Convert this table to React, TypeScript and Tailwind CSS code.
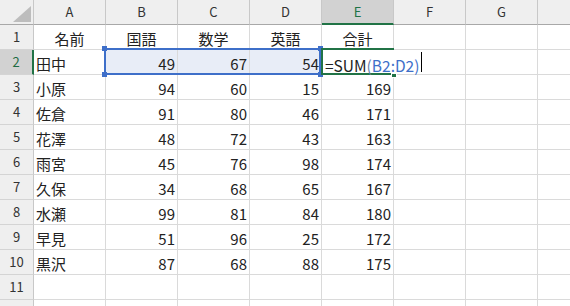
import React from "react";

const cols = ["A", "B", "C", "D", "E", "F", "G", ""];
const data: (string | number)[][] = [
  ["名前", "国語", "数学", "英語", "合計"],
  ["田中", 49, 67, 54, ""],
  ["小原", 94, 60, 15, 169],
  ["佐倉", 91, 80, 46, 171],
  ["花澤", 48, 72, 43, 163],
  ["雨宮", 45, 76, 98, 174],
  ["久保", 34, 68, 65, 167],
  ["水瀬", 99, 81, 84, 180],
  ["早見", 51, 96, 25, 172],
  ["黒沢", 87, 68, 88, 175],
  [],
  [],
];

const font = {
  fontFamily: '"Noto Sans CJK JP", "Noto Sans", sans-serif',
};

export default function App() {
  return (
    <div
      className="relative w-[570px] h-[306px] overflow-hidden bg-white text-[#222]"
      style={font}
    >
      <div className="grid grid-cols-[34px_repeat(8,72px)] w-[610px]">
        {/* corner */}
        <div className="relative h-[25px] bg-[#efefef] border-r border-b border-r-[#c8c8c8] border-b-[#a8a8a8]">
          <div className="absolute left-[13px] top-[6px] w-0 h-0 border-l-[18px] border-l-transparent border-b-[16px] border-b-[#bdbdbd]" />
        </div>
        {cols.map((c, i) => (
          <div
            key={c + i}
            className={
              c === "E"
                ? "h-[25px] bg-[#d2d2d2] border-r border-r-[#c8c8c8] border-b-2 border-b-[#217346] flex items-center justify-center text-[13px] text-[#217346]"
                : "h-[25px] bg-[#efefef] border-r border-r-[#c8c8c8] border-b border-b-[#a8a8a8] flex items-center justify-center text-[13px] text-[#333]"
            }
          >
            {c}
          </div>
        ))}
        {data.map((row, r) => (
          <React.Fragment key={r}>
            <div
              className={
                r === 1
                  ? "h-[25px] bg-[#d2d2d2] border-b border-b-[#d4d4d4] border-r-2 border-r-[#217346] flex items-center justify-center text-[13px] text-[#1e6b43]"
                  : "h-[25px] bg-[#efefef] border-b border-b-[#d4d4d4] border-r border-r-[#c8c8c8] flex items-center justify-center text-[13px] text-[#333]"
              }
            >
              {r < 11 ? r + 1 : ""}
            </div>
            {cols.map((_, c) => {
              const v = row[c];
              const sel = r === 1 && c >= 1 && c <= 3;
              const isNum = typeof v === "number";
              const center = r === 0;
              let cls =
                "h-[25px] border-b border-[#dadada] flex items-center text-[15px] leading-none pt-[3px] whitespace-nowrap ";
              if (sel) cls += "bg-[#e8edf7] ";
              if (center) cls += "justify-center ";
              else if (isNum) cls += "justify-end pr-[2px] ";
              else cls += "pl-[2px] ";
              if (r === 1 && c === 4) {
                return (
                  <div key={c} className={cls + "relative overflow-visible border-r border-r-white"}>
                    <span className="absolute left-[3px] top-[4px] text-[15.5px] leading-[22px] z-20">
                      <span className="text-[#222]">=SUM</span>
                      <span className="text-[#6a7ea8]">(</span>
                      <span className="text-[#3e6fc9]">B2:D2)</span>
                    </span>
                  </div>
                );
              }
              return (
                <div key={c} className={cls + "border-r"}>
                  {v === undefined ? "" : String(v)}
                </div>
              );
            })}
          </React.Fragment>
        ))}
      </div>

      {/* blue reference selection */}
      <div className="absolute left-[104px] top-[48px] w-[217px] h-[27px] border-2 border-[#3e6fc9] pointer-events-none" />
      <div className="absolute left-[102px] top-[46px] w-[5px] h-[5px] bg-[#3e6fc9]" />
      <div className="absolute left-[102px] top-[72px] w-[5px] h-[5px] bg-[#3e6fc9]" />
      <div className="absolute left-[318px] top-[46px] w-[5px] h-[5px] bg-[#3e6fc9]" />
      <div className="absolute left-[318px] top-[72px] w-[5px] h-[5px] bg-[#3e6fc9]" />

      {/* active cell (editing: no right edge) */}
      <div className="absolute left-[321px] top-[48px] w-[73px] h-[27px] border-t-2 border-b-2 border-l-2 border-[#217346] pointer-events-none" />
      <div className="absolute left-[391px] top-[73px] w-[6px] h-[5px] bg-[#217346] border border-white" />

      {/* text cursor */}
      <div className="absolute left-[421px] top-[52px] w-[1px] h-[20px] bg-black" />
    </div>
  );
}
